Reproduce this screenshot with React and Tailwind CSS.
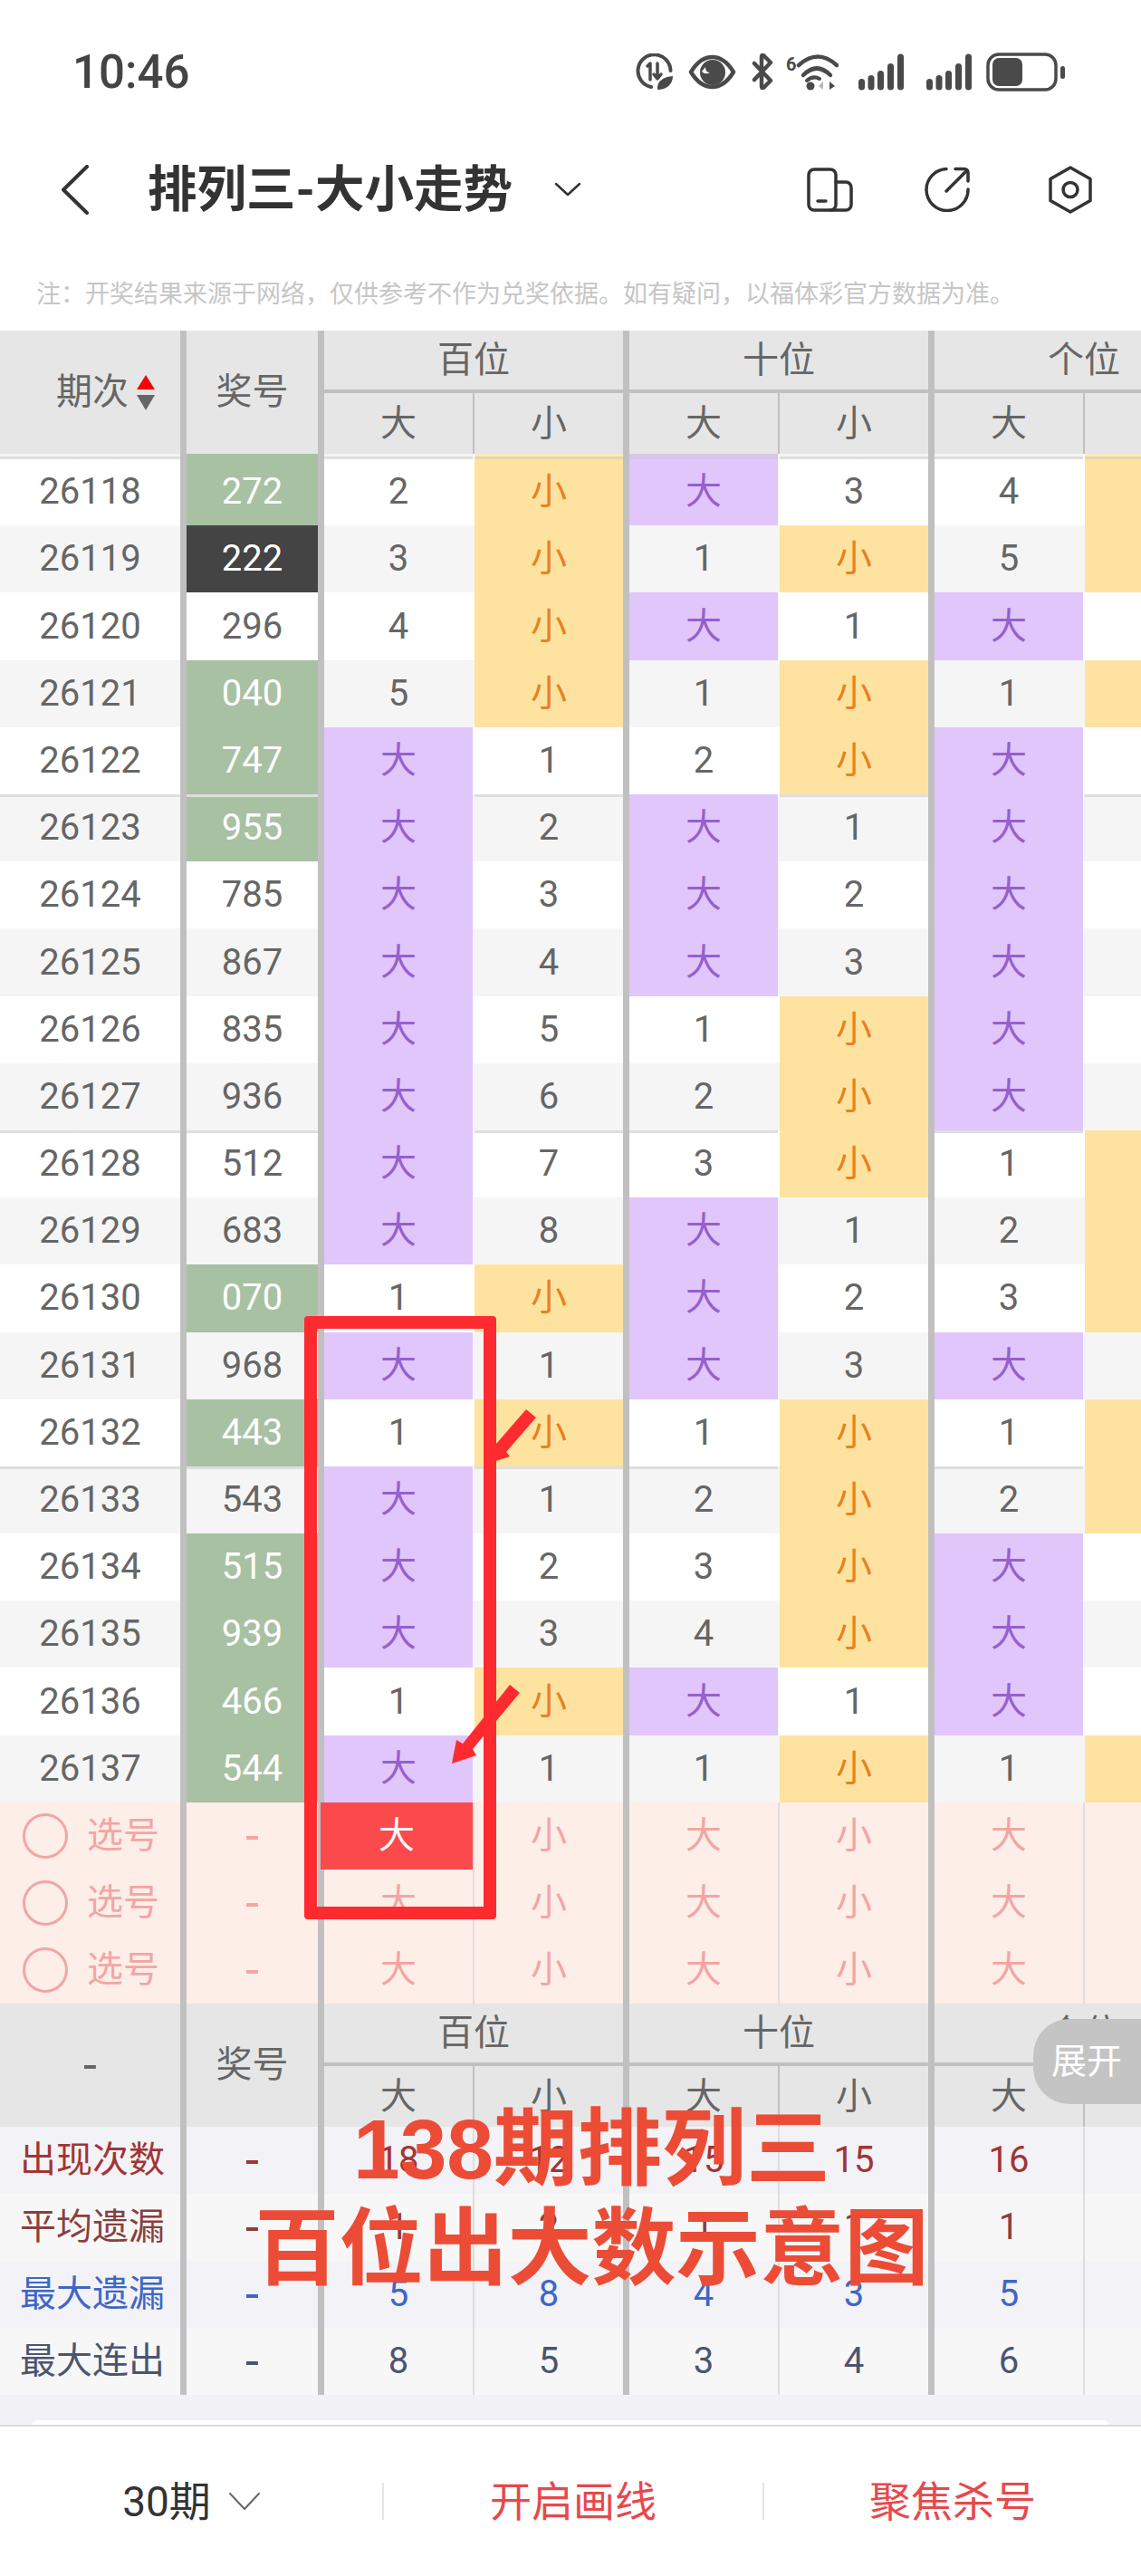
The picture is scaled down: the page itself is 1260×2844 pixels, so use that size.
const GRID = "grid grid-cols-[199px_152px_171px_166px_171px_166px_171px_166px] w-[1363px]";
const THICK = "border-l-[7px] border-l-[#c0c0c0]";

// period, number, number colour, then six cells
const rows = [
  ["26118", "272", "g", 2, "小", "大", 3, 4, "小"],
  ["26119", "222", "d", 3, "小", 1, "小", 5, "小"],
  ["26120", "296", "", 4, "小", "大", 1, "大", 1],
  ["26121", "040", "g", 5, "小", 1, "小", 1, "小"],
  ["26122", "747", "g", "大", 1, 2, "小", "大", 1],
  ["26123", "955", "g", "大", 2, "大", 1, "大", 2],
  ["26124", "785", "", "大", 3, "大", 2, "大", 3],
  ["26125", "867", "", "大", 4, "大", 3, "大", 4],
  ["26126", "835", "", "大", 5, 1, "小", "大", 5],
  ["26127", "936", "", "大", 6, 2, "小", "大", 6],
  ["26128", "512", "", "大", 7, 3, "小", 1, "小"],
  ["26129", "683", "", "大", 8, "大", 1, 2, "小"],
  ["26130", "070", "g", 1, "小", "大", 2, 3, "小"],
  ["26131", "968", "", "大", 1, "大", 3, "大", 1],
  ["26132", "443", "g", 1, "小", 1, "小", 1, "小"],
  ["26133", "543", "", "大", 1, 2, "小", 2, "小"],
  ["26134", "515", "g", "大", 2, 3, "小", "大", 1],
  ["26135", "939", "g", "大", 3, 4, "小", "大", 2],
  ["26136", "466", "g", 1, "小", "大", 1, "大", 3],
  ["26137", "544", "g", "大", 1, 1, "小", 1, "小"],
];

const stats = [
  { label: "出现次数", bg: "bg-[#f2f2f7]", text: "text-[#a23434]", vals: [18, 12, 15, 15, 16, 14] },
  { label: "平均遗漏", bg: "bg-[#f7f7f7]", text: "text-[#8a3f3f]", vals: [1, 2, 1, 1, 1, 1] },
  { label: "最大遗漏", bg: "bg-[#f2f2f7]", text: "text-[#3f66c6]", vals: [5, 8, 4, 3, 5, 5] },
  { label: "最大连出", bg: "bg-[#f7f7f7]", text: "text-[#4b5570]", vals: [8, 5, 3, 4, 6, 4] },
];

function Dash() {
  return <span className="text-[54px] leading-none">-</span>;
}

function Back() {
  return (
    <svg width="31" height="55" viewBox="0 0 31 55" fill="none" stroke="#333" strokeWidth="4" strokeLinecap="round" strokeLinejoin="round">
      <path d="M29 2 L3 27.5 L29 53" />
    </svg>
  );
}

function LeafCircle() {
  return (
    <svg width="42" height="41" viewBox="0 0 42 41" fill="none" stroke="#4a4a4a" strokeWidth="4" strokeLinecap="round" strokeLinejoin="round">
      <path d="M17 37 A18 18 0 1 1 38.5 19" />
      <path d="M13 14 L16 11 V29" strokeWidth="3.5" />
      <path d="M24 11 V28 M20 23 L24 28 L28 23" strokeWidth="3.5" />
      <path d="M24 40 C23 30 31 26 41 25 C41 34 34 40 24 40Z" fill="#4a4a4a" stroke="none" />
    </svg>
  );
}

function Eye() {
  return (
    <svg width="53" height="39" viewBox="0 0 53 39" fill="none">
      <path d="M3 19.5 Q13 3 26.5 3 Q40 3 50 19.5 Q40 36 26.5 36 Q13 36 3 19.5Z" stroke="#4a4a4a" strokeWidth="4.5" strokeLinejoin="round" />
      <circle cx="27" cy="20" r="14" fill="#4a4a4a" />
      <path d="M19 14 Q19 20 24 20 Q19 23 15 19 Z" fill="#fff" />
    </svg>
  );
}

function Bluetooth() {
  return (
    <svg width="24" height="40" viewBox="0 0 24 40" fill="none" stroke="#4a4a4a" strokeWidth="4.5" strokeLinecap="round" strokeLinejoin="round">
      <path d="M3 11 L21 30 L13 38 Q11 39 11 36 V4 Q11 1 13 2 L21 10 L3 29" />
    </svg>
  );
}

function Wifi() {
  return (
    <svg width="58" height="41" viewBox="0 0 58 41" fill="none" stroke="#4a4a4a" strokeLinecap="round">
      <text x="0" y="19" fontSize="20" fontWeight="700" fill="#4a4a4a" stroke="none" fontFamily="Roboto, sans-serif">6</text>
      <path d="M14 13 Q35 -6 56 13" strokeWidth="4.5" />
      <path d="M19 24 Q34 9 49 24" strokeWidth="4.5" />
      <path d="M23 30 Q30 24 37 28" strokeWidth="4" />
      <circle cx="27" cy="36" r="4.5" fill="#4a4a4a" stroke="none" />
      <path d="M36 36 L41 31 V40 Z" fill="#b5b5b5" stroke="none" />
      <path d="M48 31 L54 36 L48 40 Z" fill="#4a4a4a" stroke="none" />
    </svg>
  );
}

function Signal() {
  const bars = [[1, 28], [11.5, 24], [22, 19], [33, 11], [44, 0.5]];
  return (
    <svg width="51" height="41" viewBox="0 0 51 41" fill="#4a4a4a">
      {bars.map(([x, y]) => (
        <rect key={x} x={x} y={y} width="7" height={40.5 - y} rx="3.5" />
      ))}
    </svg>
  );
}

function Battery() {
  return (
    <svg width="87" height="43" viewBox="0 0 87 43" fill="none">
      <rect x="2" y="2" width="75" height="39" rx="12" stroke="#4a4a4a" strokeWidth="3.5" />
      <rect x="7" y="6" width="33" height="31" rx="7" fill="#4a4a4a" />
      <rect x="82" y="15" width="5" height="14" rx="2.5" fill="#4a4a4a" />
    </svg>
  );
}

function StatusBar() {
  return (
    <div className="h-[158px] flex items-center pl-[80px]">
      <span className="text-[51px] leading-none text-[#444] font-medium w-[622px]">10:46</span>
      <div className="flex items-center">
        <LeafCircle />
        <div className="ml-[16px]"><Eye /></div>
        <div className="ml-[17px]"><Bluetooth /></div>
        <div className="ml-[14px]"><Wifi /></div>
        <div className="ml-[21px]"><Signal /></div>
        <div className="ml-[24px]"><Signal /></div>
        <div className="ml-[16px]"><Battery /></div>
      </div>
    </div>
  );
}

function NavBar() {
  return (
    <div className="h-[102px] flex items-center pl-[67px] pr-[54px]">
      <Back />
      <h1 className="ml-[65px] text-[54.5px] leading-none font-bold text-[#333] whitespace-nowrap">排列三-大小走势</h1>
      <svg className="ml-[46px]" width="30" height="16" viewBox="0 0 30 16" fill="none" stroke="#333" strokeWidth="2.5" strokeLinecap="round" strokeLinejoin="round">
        <path d="M2 2 L15 14 L28 2" />
      </svg>
      <div className="ml-auto flex items-center">
        <svg width="51" height="49" viewBox="0 0 51 49" fill="none" stroke="#333" strokeWidth="3.5" strokeLinecap="round" strokeLinejoin="round">
          <rect x="2" y="2" width="30" height="45" rx="6" />
          <path d="M32 16 H43 a6 6 0 0 1 6 6 V41 a6 6 0 0 1 -6 6 H26" />
          <path d="M12 37 H21" />
        </svg>
        <svg className="ml-[78px]" width="51" height="50" viewBox="0 0 51 50" fill="none" stroke="#333" strokeWidth="3.5" strokeLinecap="round" strokeLinejoin="round">
          <path d="M25 2.5 A23 23 0 1 0 49 25" />
          <path d="M25 27 L48 4" />
          <path d="M35 2.5 H45 a4 4 0 0 1 4 4 V16" />
        </svg>
        <svg className="ml-[87px]" width="48" height="53" viewBox="0 0 48 53" fill="none" stroke="#333" strokeWidth="3.5" strokeLinejoin="round">
          <path d="M24 2 L46 14.5 V38.5 L24 51 L2 38.5 V14.5 Z" />
          <circle cx="24" cy="26.5" r="8" />
        </svg>
      </div>
    </div>
  );
}

function SortArrows() {
  return (
    <svg className="ml-[9px]" width="20" height="39" viewBox="0 0 20 39">
      <path d="M10 0 L20 16 H0 Z" fill="#f00" />
      <path d="M0 22 H20 L10 39 Z" fill="#666" />
    </svg>
  );
}

// both grey header blocks share this, only the first cell differs
function TableHead({ first }) {
  const groupCell = "flex items-center justify-center col-span-2 " + THICK;
  const sub = "flex items-center justify-center border-t-[4px] border-t-[#c0c0c0]";
  return (
    <div className={GRID + " grid-rows-[65px_71px] bg-[#e6e6e6] text-[#666] text-[40px] leading-none"}>
      <div className="row-span-2 flex items-center">{first}</div>
      <div className={"row-span-2 flex items-center justify-center " + THICK}>奖号</div>
      <div className={groupCell}>百位</div>
      <div className={groupCell}>十位</div>
      <div className={groupCell}>个位</div>
      {["大", "小", "大", "小", "大", "小"].map((t, i) => (
        <div key={i} className={sub + " " + (i % 2 === 0 ? THICK : "border-l-[2px] border-l-[#c0c0c0]")}>{t}</div>
      ))}
    </div>
  );
}

function valueCell(v, i, first) {
  const side = i % 2 === 0 ? THICK : "border-l-[2px] border-l-transparent";
  let tone = "text-[#666]";
  let inset = first ? "shadow-[inset_0_3px_0_#f3f3f3,inset_0_6px_0_#dedede]" : "";
  if (v === "大") {
    tone = "bg-[#e0c6fb] text-[#9560cc]";
    if (first) inset = "shadow-[inset_0_6px_0_#d8c4ea]";
  }
  if (v === "小") {
    tone = "bg-[#fee3a0] text-[#e8811f]";
    if (first) inset = "shadow-[inset_0_3px_0_#fde9bc,inset_0_6px_0_#e4d5ac]";
  }
  return (
    <div key={i} className={"flex items-center justify-center bg-clip-padding " + side + " " + tone + " " + inset + (first ? " pt-[5px]" : "")}>
      {v}
    </div>
  );
}

function DataRow({ row, index }) {
  const [period, num, color, ...cells] = row;
  const first = index === 0;
  const groupStart = index > 0 && index % 5 === 0;
  let numTone = "text-[#666]";
  if (color === "g") numTone = "bg-[#a8c1a3] text-white";
  if (color === "d") numTone = "bg-[#444] text-white";
  const line = groupStart ? "shadow-[inset_0_3px_0_#dedede]" : "";
  return (
    <div className={GRID + " text-[40px] leading-none " + (first ? "h-[79.3px] " : "h-[74.2px] ") + (index % 2 === 0 ? "bg-white" : "bg-[#f5f5f5]")}>
      <div className={"flex items-center justify-center text-[#666] " + line + (first ? " shadow-[inset_0_3px_0_#f3f3f3,inset_0_6px_0_#dedede] pt-[5px]" : "")}>{period}</div>
      <div className={"flex items-center justify-center " + THICK + " " + numTone + " " + line + (first ? " pt-[5px]" : "")}>{num}</div>
      {cells.map((v, i) => (
        groupStart && v !== "大" && v !== "小" ? (
          <div key={i} className={"flex items-center justify-center text-[#666] bg-clip-padding " + line + " " + (i % 2 === 0 ? THICK : "border-l-[2px] border-l-transparent")}>{v}</div>
        ) : valueCell(v, i, first)
      ))}
    </div>
  );
}

function PickRow({ active }) {
  const thin = "flex items-center justify-center border-l-[2px] border-l-[#dedede]";
  const thick = "flex items-center justify-center " + THICK;
  return (
    <div className={GRID + " h-[74.2px] bg-[#fdeee8] text-[#f3a5a5] text-[40px] leading-none"}>
      <div className="flex items-center pl-[25px]">
        <span className="w-[50px] h-[50px] rounded-full border-[3px] border-[#f3a5a5]"></span>
        <span className="ml-[21px]">选号</span>
      </div>
      <div className={thick}><Dash /></div>
      {active ? (
        <div className="flex items-center justify-center border-l-[3px] border-l-[#c0c0c0] bg-[#fb4a4c] text-white">大</div>
      ) : (
        <div className={thick}>大</div>
      )}
      <div className={thin}>小</div>
      <div className={thick}>大</div>
      <div className={thin}>小</div>
      <div className={thick}>大</div>
      <div className={thin}>小</div>
    </div>
  );
}

function StatRow({ stat }) {
  return (
    <div className={GRID + " h-[74px] text-[40px] leading-none " + stat.bg + " " + stat.text}>
      <div className="flex items-center pl-[22px]">{stat.label}</div>
      <div className={"flex items-center justify-center " + THICK}><Dash /></div>
      {stat.vals.map((v, i) => (
        <div key={i} className={"flex items-center justify-center " + (i % 2 === 0 ? THICK : "border-l-[2px] border-l-[#dedede]")}>{v}</div>
      ))}
    </div>
  );
}

function BottomBar() {
  return (
    <div className="h-[167px] border-t-[2px] border-[#dcdcdc] bg-white flex items-center text-[46px] leading-none">
      <div className="w-[422px] h-[41px] flex items-center justify-center text-[#333]">
        30期
        <svg className="ml-[20px]" width="34" height="19" viewBox="0 0 34 19" fill="none" stroke="#666" strokeWidth="2" strokeLinecap="round" strokeLinejoin="round">
          <path d="M1 1 L17 18 L33 1" />
        </svg>
      </div>
      <div className="w-[420px] h-[41px] flex items-center justify-center text-[#e8484c] border-l-[2px] border-[#e4e4e4]">开启画线</div>
      <div className="w-[418px] h-[41px] flex items-center justify-center text-[#e8484c] border-l-[2px] border-[#e4e4e4]">聚焦杀号</div>
    </div>
  );
}

export default function App() {
  return (
    <div className="relative w-[1260px] h-[2844px] overflow-hidden bg-white [font-family:Roboto,'Noto_Sans_CJK_SC',sans-serif]">
      <StatusBar />
      <NavBar />
      <div className="h-[105px] pt-[50px] pl-[40px] text-[27px] leading-[30px] text-[#c6c6c6] whitespace-nowrap">
        注：开奖结果来源于网络，仅供参考不作为兑奖依据。如有疑问，以福体彩官方数据为准。
      </div>

      <TableHead first={<span className="flex items-center pl-[62px]">期次<SortArrows /></span>} />
      {rows.map((row, i) => (
        <DataRow key={row[0]} row={row} index={i} />
      ))}
      <PickRow active />
      <PickRow />
      <PickRow />

      <TableHead first={<span className="w-full text-center"><Dash /></span>} />
      {stats.map((s) => (
        <StatRow key={s.label} stat={s} />
      ))}

      <div className="h-[33px] bg-[#f2f2f6] flex items-end px-[36px]">
        <div className="w-full h-[5px] bg-white rounded-t-[8px]"></div>
      </div>
      <BottomBar />

      {/* hand-drawn markup on top of the screenshot */}
      <div className="absolute left-[336px] top-[1453px] w-[212px] h-[666px] border-[14px] border-[#fd2b30] rounded-[4px]"></div>
      <svg className="absolute inset-0 pointer-events-none" width="1260" height="2844" viewBox="0 0 1260 2844" fill="#fd2b30">
        <path d="M581 1556 L592 1565 L559 1603 L563 1608 L541 1615 L543 1592 L548 1594 Z" />
        <path d="M563 1860 L574 1869 L522 1931 L526 1938 L499 1947 L504 1921 L511 1925 Z" />
      </svg>
      <div className="absolute right-0 top-[2229px] w-[119px] h-[94px] rounded-l-[40px] bg-[#c4c4c4] text-white text-[39px] leading-none flex items-center pl-[20px]">展开</div>
      <div className="absolute left-[236px] top-[2318px] w-[835px] text-center text-[93px] leading-[110px] font-bold text-[#ec4c36] [font-family:'Liberation_Sans','Noto_Sans_CJK_SC',sans-serif]">
        <div>138期排列三</div>
        <div>百位出大数示意图</div>
      </div>
    </div>
  );
}
